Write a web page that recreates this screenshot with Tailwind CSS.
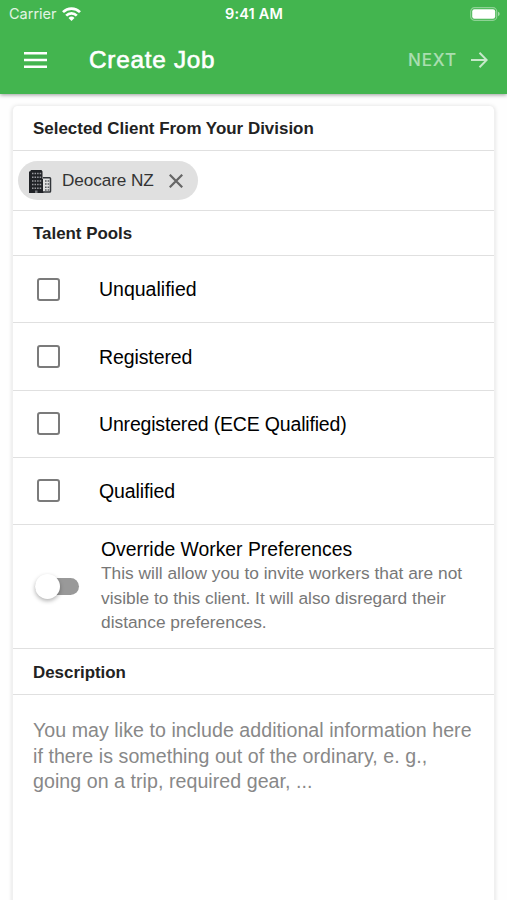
<!DOCTYPE html>
<html lang="en">
<head>
<meta charset="utf-8">
<title>Create Job</title>
<script src="https://cdn.jsdelivr.net/npm/@tailwindcss/browser@4"></script>
</head>
<body class="bg-white">
<div class="flex h-[900px] w-[507px] flex-col overflow-hidden bg-[#fefefe] font-['Liberation_Sans',Arial,sans-serif] text-black">
  <header class="relative z-10 flex h-[94px] shrink-0 flex-col bg-[#43b54f] text-white shadow-[0_1px_4px_rgba(0,0,0,0.4)]">
    <div class="grid h-[28px] grid-cols-3 items-center pl-[9px] pr-[7px] font-['Inter',sans-serif]">
      <div class="flex items-center gap-[5px]">
        <span class="text-[14.5px] leading-none text-white/85">Carrier</span>
        <svg class="h-[14px] w-[19px]" viewBox="0 0 19 14" fill="none" stroke="white" stroke-width="2.7"><path d="M1 5.1a12.2 12.2 0 0 1 17 0"/><path d="M4.2 8.6a7.6 7.6 0 0 1 10.6 0"/><path d="M9.500 14 6.500 11a4.300 4.300 0 0 1 6 0z" fill="white" stroke="none"/></svg>
      </div>
      <span class="-ml-[1px] text-center text-[14.5px] font-semibold leading-none tracking-[0.15px] whitespace-nowrap">9:41 AM</span>
      <svg class="h-[14px] w-[30px] justify-self-end" viewBox="0 0 30 14"><rect x=".7" y=".7" width="26" height="12.600" rx="3.800" fill="none" stroke="white" stroke-opacity=".4" stroke-width="1.200"/><rect x="2.200" y="2.200" width="23" height="9.600" rx="2.200" fill="white"/><path d="M28 4.800q1.700.6 1.700 2.200T28 9.200z" fill="white" fill-opacity=".5"/></svg>
    </div>
    <div class="flex h-[64px] items-center pl-[24px] pr-[19px]">
      <svg class="h-[16px] w-[23px]" viewBox="0 0 23 16" fill="white"><path d="M0 0h23v2.600H0zM0 6.700h23v2.600H0zM0 13.400h23V16H0z"/></svg>
      <h1 class="ml-[42px] text-[24.3px] leading-none tracking-[0.75px] [-webkit-text-stroke:0.6px_white]">Create Job</h1>
      <div class="ml-auto flex items-center gap-[14px] text-white/55">
        <span class="font-['Inter',sans-serif] text-[17px] font-medium leading-none tracking-[0.9px]">NEXT</span>
        <svg class="h-[16px] w-[17px]" viewBox="0 0 17 16" fill="none" stroke="#ffffff" stroke-opacity=".7" stroke-width="2"><path d="M0 8h15.500M8.500.8 15.700 8l-7.200 7.200"/></svg>
      </div>
    </div>
  </header>

  <main class="mx-[12px] mt-[12px] flex h-[810px] shrink-0 flex-col rounded-t-[5px] border-x border-[#f0f0f0] bg-white shadow-[0_0_4px_rgba(0,0,0,0.13)]">
    <h2 class="flex h-[45px] shrink-0 items-center border-b border-[#e0e0e0] pl-[20px] pt-[2px] text-[16.95px] font-bold text-[#222]">Selected Client From Your Division</h2>
    <div class="flex h-[60px] shrink-0 items-center border-b border-[#e0e0e0] pl-[5px]">
      <div class="flex h-[39px] w-[180px] items-center rounded-full bg-[#e0e0e0] pl-[11px]">
        <svg class="h-[24px] w-[23px]" viewBox="0 0 23 24"><path d="M1 2.500 2 1h10.500l1 1.500V10H14.500V24H0V2.500z" fill="#202226"/><path d="M14 8.700h6.700q.8 0 .8.800V22.200q0 .8-.8.800H14" fill="#e0e0e0" stroke="#33363a" stroke-width="1.500"/><path d="M3 4.500h9.200M3 8.200h9.200M3 11.900h9.200M3 15.600h9.200M3 19.300h9.200" stroke="#9b9ca0" stroke-width="1.500" stroke-dasharray="1.500 1.060"/><path d="M16 12h4.200M16 15.100h4.200M16 18.200h4.200M16 21h4.200" stroke="#5a5d61" stroke-width="1.500" stroke-dasharray="1.600 1"/><path d="M6 21.500h2.500v2.500H6z" fill="#77797d"/></svg>
        <span class="ml-[10px] pt-[1px] text-[17.2px] tracking-[-0.1px] text-[#333]">Deocare NZ</span>
        <svg class="ml-[15px] h-[14px] w-[14px]" viewBox="0 0 13 13" stroke="#666" stroke-width="2.100"><path d="m.7.7 11.600 11.600M12.300.7.7 12.300"/></svg>
      </div>
    </div>
    <h2 class="flex h-[45px] shrink-0 items-center border-b border-[#e0e0e0] pl-[20px] pt-[2px] text-[16.9px] font-bold text-[#222]">Talent Pools</h2>
    <label class="flex h-[67px] shrink-0 items-center border-b border-[#e0e0e0] pl-[24px] text-[19.5px]"><span class="mr-[39px] h-[23px] w-[23px] rounded-[3px] border-[2.500px] border-[#7b7b7b]"></span><span class="pt-[2px]">Unqualified</span></label>
    <label class="flex h-[67.500px] shrink-0 items-center border-b border-[#e0e0e0] pl-[24px] text-[19.5px]"><span class="mr-[39px] h-[23px] w-[23px] rounded-[3px] border-[2.500px] border-[#7b7b7b]"></span><span class="pt-[2px] tracking-[-0.1px]">Registered</span></label>
    <label class="flex h-[67px] shrink-0 items-center border-b border-[#e0e0e0] pl-[24px] text-[19.5px]"><span class="mr-[39px] h-[23px] w-[23px] rounded-[3px] border-[2.500px] border-[#7b7b7b]"></span><span class="pt-[2px] tracking-[-0.18px]">Unregistered (ECE Qualified)</span></label>
    <label class="flex h-[67.500px] shrink-0 items-center border-b border-[#e0e0e0] pl-[24px] text-[19.5px]"><span class="mr-[39px] h-[23px] w-[23px] rounded-[3px] border-[2.500px] border-[#7b7b7b]"></span><span class="pt-[2px] tracking-[-0.1px]">Qualified</span></label>
    <div class="flex h-[124px] shrink-0 items-center border-b border-[#e0e0e0] pl-[22px]">
      <div class="flex h-[17px] w-[44px] items-center rounded-full bg-[#999]">
        <span class="h-[25px] w-[25px] shrink-0 rounded-full bg-white shadow-[0_2px_4px_rgba(0,0,0,0.3)]"></span>
      </div>
      <div class="-mt-[1px] ml-[22px]">
        <div class="text-[19.35px] leading-[24px]">Override Worker Preferences</div>
        <p class="text-[17.33px] leading-[24.4px] text-[#777]">This will allow you to invite workers that are not<br>visible to this client. It will also disregard their<br>distance preferences.</p>
      </div>
    </div>
    <h2 class="flex h-[46px] shrink-0 items-center border-b border-[#e0e0e0] pl-[20px] pt-[2px] text-[16.9px] font-bold text-[#222]">Description</h2>
    <p class="pl-[20px] pt-[23px] text-[19.6px] leading-[25.700px] tracking-[0.05px] text-[#888]">You may like to include additional information here<br>if there is something out of the ordinary, e. g.,<br>going on a trip, required gear, ...</p>
  </main>
</div>
</body>
</html>
